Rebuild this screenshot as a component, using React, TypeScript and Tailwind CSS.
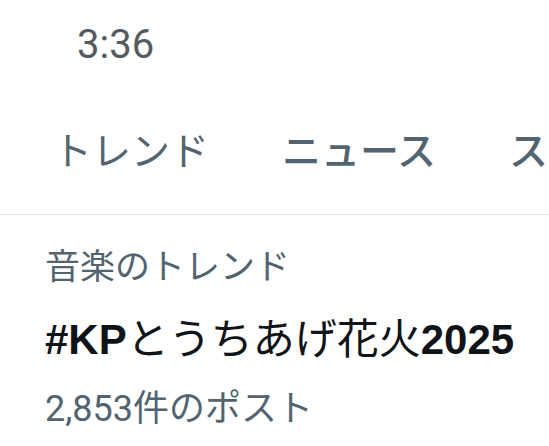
import React from "react";

const cjk = "font-['Noto_Sans_CJK_JP',sans-serif]";

const tabs = ["トレンド", "ニュース", "スポーツ"];

const App: React.FC = () => {
    return (
        <div className="w-[549px] h-[446px] overflow-hidden bg-white">
            <div className="h-[100px] pl-[77px] pt-[25px]">
                <span className="text-[40px] leading-none text-[#555a5e] font-['Roboto',sans-serif]">3:36</span>
            </div>

            <div className={`flex gap-[73px] pl-[53px] h-[114px] pt-[29px] whitespace-nowrap ${cjk}`}>
                {tabs.map((t, i) => (
                    <span
                        key={t}
                        className={`text-[39px] leading-none text-[#536471] ${i === 0 ? "font-normal" : "font-medium"}`}
                    >
                        {t}
                    </span>
                ))}
            </div>

            <div className="border-t border-[#e1e4e7]" />

            <div className={`pl-[45px] pt-[31px] ${cjk}`}>
                <div className="text-[35px] leading-none text-[#536471]">音楽のトレンド</div>
                <div className="mt-[34px] text-[42px] leading-none text-[#0f1419] whitespace-nowrap">
                    <span className="font-bold font-['Liberation_Sans',sans-serif]">#KP</span>
                    <span className="font-normal">とうちあげ花火</span>
                    <span className="font-bold font-['Liberation_Sans',sans-serif]">2025</span>
                </div>
                <div className="mt-[26px] text-[36px] leading-none text-[#536471]">
                    <span className="font-['Roboto',sans-serif]">2,853</span>件のポスト
                </div>
            </div>
        </div>
    );
};

export default App;
